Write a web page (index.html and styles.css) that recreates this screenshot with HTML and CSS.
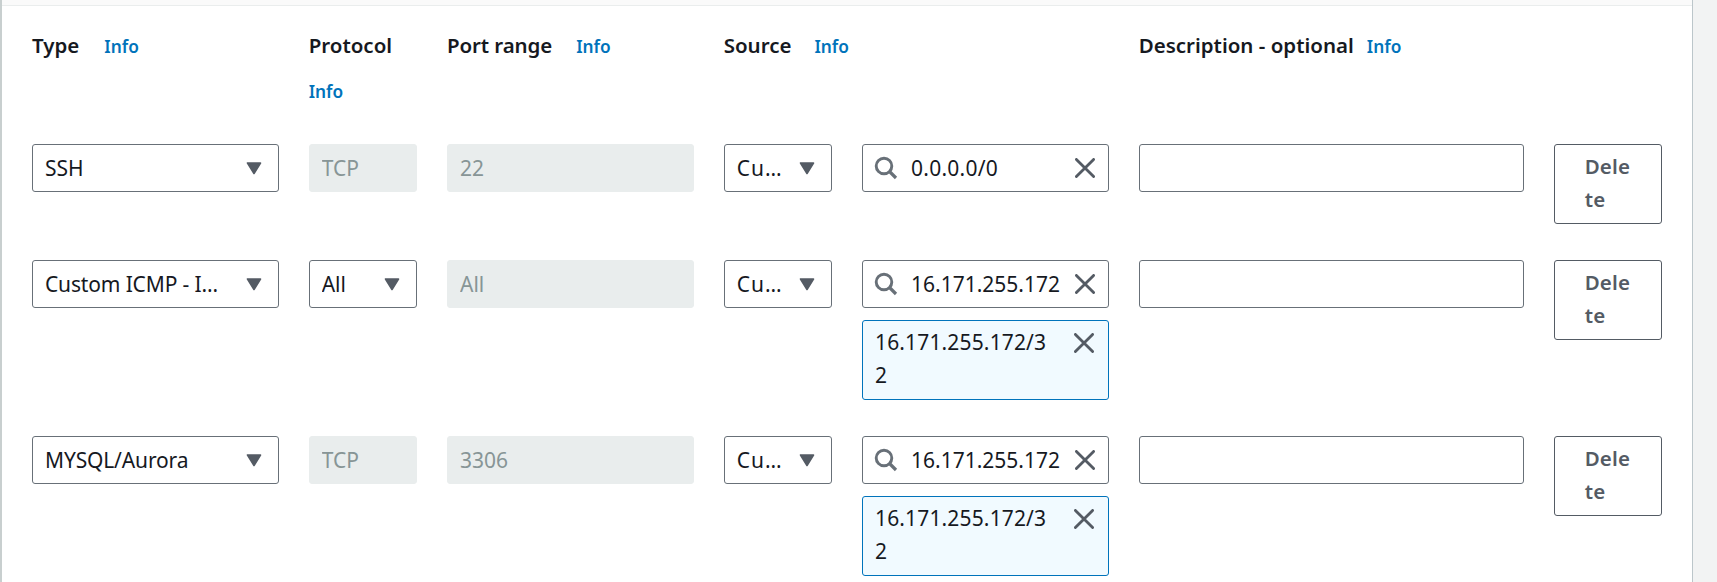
FILE: index.html
```
<!DOCTYPE html>
<html lang="en">
<head>
<meta charset="utf-8">
<title>Inbound rules</title>
<link rel="stylesheet" href="styles.css">
</head>
<body>
<svg class="defs" width="0" height="0" aria-hidden="true">
  <symbol id="caret" viewBox="0 0 16 13"><path d="M1.5 1h13L8 11.5z" fill="#545b64" stroke="#545b64" stroke-width="1.6" stroke-linejoin="round"/></symbol>
  <symbol id="search" viewBox="0 0 24 24"><circle cx="10" cy="10" r="7.8" fill="none" stroke="#687078" stroke-width="2.9"/><path d="M15.5 15.5l6.5 6.5" stroke="#687078" stroke-width="3.2"/></symbol>
  <symbol id="close" viewBox="0 0 20 20"><path d="M1.4 1.4l17.2 17.2M18.6 1.4L1.4 18.6" stroke="#545b64" stroke-width="2.8" stroke-linecap="round"/></symbol>
</svg>
<main class="panel">
  <div class="panel-top"></div>
  <div class="rules">
    <div class="row head">
      <div class="w2"><span class="label type">Type</span><a class="info">Info</a></div>
      <div class="w1"><span class="label protocol">Protocol</span><a class="info">Info</a></div>
      <div class="w2"><span class="label port">Port range</span><a class="info">Info</a></div>
      <div class="w3"><span class="label source">Source</span><a class="info">Info</a></div>
      <div class="w4"><span class="label description">Description - optional</span><a class="info">Info</a></div>
    </div>
    <div class="row">
      <div class="w2 field"><span class="value">SSH</span><svg class="caret"><use href="#caret"/></svg></div>
      <div class="w1 field disabled"><span class="value">TCP</span></div>
      <div class="w2 field disabled"><span class="value">22</span></div>
      <div class="w1 field"><span class="value custom">Cu…</span><svg class="caret"><use href="#caret"/></svg></div>
      <div class="w2"><div class="field"><svg class="search"><use href="#search"/></svg><span class="value query zero">0.0.0.0/0</span><svg class="close"><use href="#close"/></svg></div></div>
      <div class="w3 field"></div>
      <button class="w1 delete">Delete</button>
    </div>
    <div class="row">
      <div class="w2 field"><span class="value icmp">Custom ICMP - I…</span><svg class="caret"><use href="#caret"/></svg></div>
      <div class="w1 field"><span class="value">All</span><svg class="caret"><use href="#caret"/></svg></div>
      <div class="w2 field disabled"><span class="value">All</span></div>
      <div class="w1 field"><span class="value custom">Cu…</span><svg class="caret"><use href="#caret"/></svg></div>
      <div class="w2">
        <div class="field"><svg class="search"><use href="#search"/></svg><span class="value query">16.171.255.172</span><svg class="close"><use href="#close"/></svg></div>
        <div class="token"><span class="address">16.171.255.172/32</span><svg class="close"><use href="#close"/></svg></div>
      </div>
      <div class="w3 field"></div>
      <button class="w1 delete">Delete</button>
    </div>
    <div class="row">
      <div class="w2 field"><span class="value mysql">MYSQL/Aurora</span><svg class="caret"><use href="#caret"/></svg></div>
      <div class="w1 field disabled"><span class="value">TCP</span></div>
      <div class="w2 field disabled"><span class="value">3306</span></div>
      <div class="w1 field"><span class="value custom">Cu…</span><svg class="caret"><use href="#caret"/></svg></div>
      <div class="w2">
        <div class="field"><svg class="search"><use href="#search"/></svg><span class="value query">16.171.255.172</span><svg class="close"><use href="#close"/></svg></div>
        <div class="token"><span class="address">16.171.255.172/32</span><svg class="close"><use href="#close"/></svg></div>
      </div>
      <div class="w3 field"></div>
      <button class="w1 delete">Delete</button>
    </div>
  </div>
</main>
</body>
</html>
```
FILE: styles.css
```
* { box-sizing: border-box; }
body {
  margin: 0;
  height: 582px;
  overflow: hidden;
  background: #f2f3f3;
  color: #16191f;
  font: 21px/33px "Noto Sans", "Open Sans", sans-serif;
}
.defs { position: absolute; }
.panel {
  width: 1693px;
  height: 582px;
  overflow: hidden;
  background: #fff;
  border-left: 2px solid #c8cfcf;
  border-right: 1px solid #bcc6ca;
}
.panel-top { height: 6px; background: #fafafa; border-bottom: 1px solid #eaeded; }
.rules { padding: 17px 30px 0; }
.row {
  display: grid;
  grid-template-columns: repeat(12, minmax(0, 1fr));
  column-gap: 30px;
  align-items: start;
  margin-bottom: 36px;
}
.w1 { grid-column: span 1; }
.w2 { grid-column: span 2; }
.w3 { grid-column: span 3; }
.w4 { grid-column: span 4; }
.head { height: 85px; line-height: 45px; }
.label { font-weight: 600; font-size: 20.5px; margin-right: 25px; }
.protocol { margin-right: 0; display: block; }
.port { letter-spacing: -0.1px; margin-right: 24px; }
.source { margin-right: 23px; }
.description { margin-right: 13px; }
.info { color: #0073bb; font-weight: 600; font-size: 17.3px; }
.field {
  display: flex;
  align-items: center;
  height: 48px;
  padding: 0 16px 0 12px;
  border: 1px solid #687078;
  border-radius: 3px;
  background: #fff;
}
.value { flex: 1; white-space: nowrap; overflow: hidden; }
.custom { letter-spacing: 1px; }
.icmp { letter-spacing: -0.15px; }
.mysql { letter-spacing: -0.15px; }
.zero { letter-spacing: 0.25px; }
.disabled { background: #e9eded; border-color: #e9eded; color: #879596; }
.caret { width: 16px; height: 13px; flex: none; }
.search { width: 24px; height: 24px; flex: none; margin-right: 13px; }
.field .search { margin-left: -1px; }
.close { width: 20px; height: 20px; flex: none; margin: 0 -3px 0 14px; }
.token {
  display: flex;
  justify-content: space-between;
  height: 80px;
  margin-top: 12px;
  padding: 5px 15px 6px 12px;
  border: 1px solid #0073bb;
  border-radius: 3px;
  background: #f1faff;
}
.token .close { margin: 7px -1px 0 8px; }
.address { width: 176px; word-break: break-all; letter-spacing: 0.15px; }
.delete {
  height: 80px;
  padding: 5px 30px 7px;
  border: 1px solid #545b64;
  border-radius: 3px;
  background: #fff;
  color: #545b64;
  font: 600 20.5px/33px "Noto Sans", "Open Sans", sans-serif;
  letter-spacing: 0.2px;
  text-align: left;
  word-break: break-all;
}
```
